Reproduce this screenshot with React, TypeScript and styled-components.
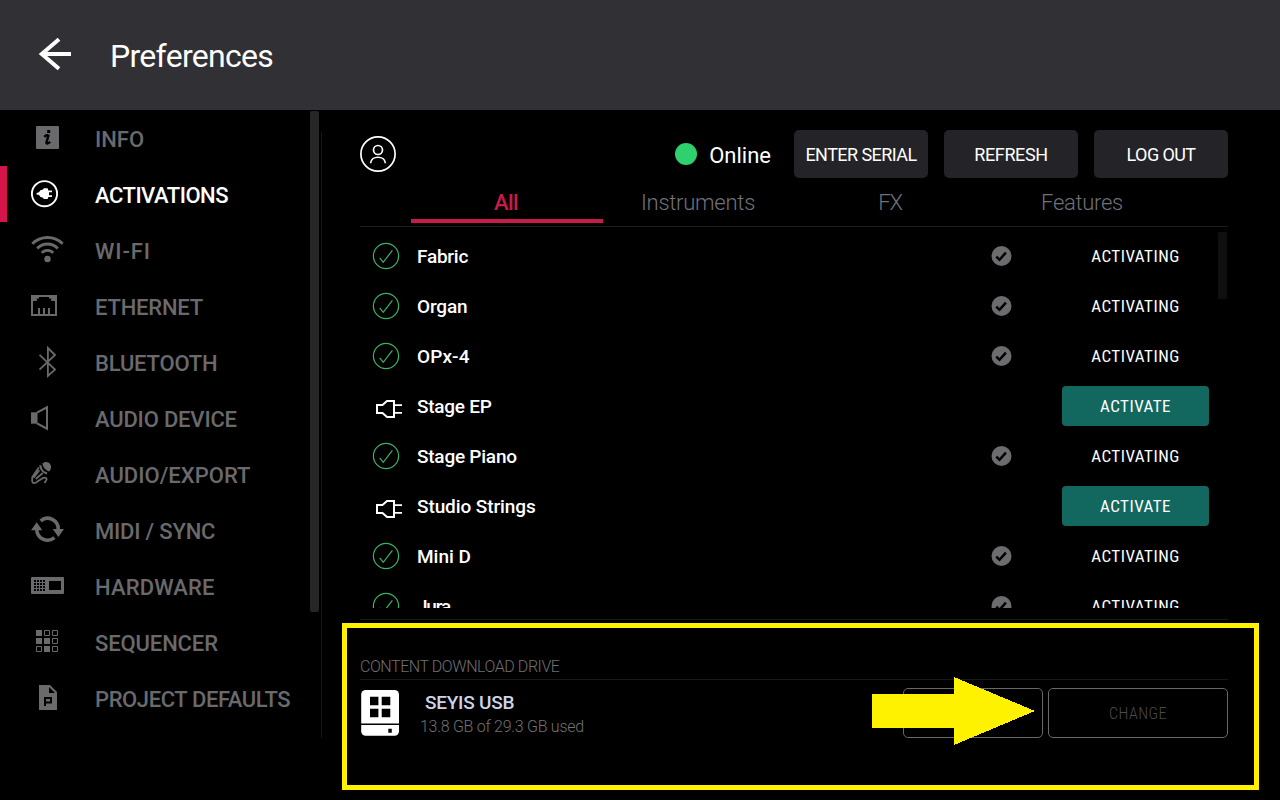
import React from 'react';
import styled, { createGlobalStyle, css } from 'styled-components';

const GlobalStyle = createGlobalStyle`
  * { box-sizing: border-box; }
  body { margin: 0; background: #000; }
  svg { display: block; flex: none; }
  button { font: inherit; margin: 0; padding: 0; border: 0; background: none; color: inherit; }
`;

const Screen = styled.div`
  position: relative;
  display: flex;
  flex-direction: column;
  width: 1280px;
  height: 800px;
  overflow: hidden;
  background: #000;
  color: #fff;
  font-family: Roboto, 'Liberation Sans', sans-serif;
  white-space: nowrap;
`;

const Header = styled.header`
  display: flex;
  align-items: center;
  flex: none;
  height: 110px;
  padding: 0 0 2px 37px;
  background: #313035;
`;

const Title = styled.h1`
  margin: 3px 0 0 36px;
  font-size: 32px;
  font-weight: 400;
  line-height: 40px;
  letter-spacing: -0.7px;
`;

const Body = styled.div`
  display: flex;
  flex: 1;
  min-height: 0;
`;

const Sidebar = styled.nav`
  width: 310px;
`;

const NavItem = styled.a<{ $active?: boolean }>`
  display: flex;
  align-items: center;
  height: 56px;
  padding-left: 21px;
  border-left: 7px solid ${p => (p.$active ? '#d5144b' : 'transparent')};
  color: ${p => (p.$active ? '#fff' : '#6a6a6c')};
`;

const NavLabel = styled.span<{ $spacing: number }>`
  margin-left: 27px;
  padding-top: 3px;
  font-size: 22px;
  font-weight: 500;
  line-height: 28px;
  letter-spacing: ${p => p.$spacing}px;
`;

const SidebarScroll = styled.div`
  width: 9px;
  height: 501px;
  margin-top: 1px;
  border-radius: 2px;
  background: #262626;
`;

const Divider = styled.div`
  width: 1px;
  height: 606px;
  margin: 22px 0 0 2px;
  background: #161616;
`;

const Main = styled.main`
  display: flex;
  flex-direction: column;
  width: 868px;
  margin-left: 38px;
  padding-top: 20px;
`;

const AccountBar = styled.div`
  display: flex;
  align-items: center;
  height: 48px;
`;

const OnlineStatus = styled.div`
  display: flex;
  align-items: center;
  gap: 12px;
  margin: 2px 23px 0 auto;
  font-size: 22px;
`;

const StatusDot = styled.i`
  width: 22px;
  height: 22px;
  margin-top: -2px;
  border-radius: 50%;
  background: #2fd06e;
`;

const AccountActions = styled.div`
  display: flex;
  gap: 16px;
`;

const AccountButton = styled.button<{ $spacing: number }>`
  width: 134px;
  height: 48px;
  padding-top: 1px;
  border-radius: 5px;
  background: #242327;
  font-size: 18px;
  letter-spacing: ${p => p.$spacing}px;
`;

const Tabs = styled.div`
  display: flex;
  justify-content: center;
  height: 49px;
  padding-left: 2px;
  border-bottom: 1px solid #1c1c1c;
`;

const Tab = styled.button<{ $active?: boolean; $spacing: number }>`
  width: 192px;
  height: 45px;
  padding: 8px 2px 0 0;
  border-bottom: 4px solid ${p => (p.$active ? '#c81b48' : 'transparent')};
  color: ${p => (p.$active ? '#c81b48' : '#70717b')};
  font-size: 22px;
  font-weight: ${p => (p.$active ? 500 : 300)};
  letter-spacing: ${p => p.$spacing}px;
`;

const ListArea = styled.div`
  display: flex;
  height: 393px;
  padding-bottom: 11px;
  border-bottom: 1px solid #1c1c1c;
`;

const PluginList = styled.ul`
  width: 858px;
  margin: 4px 0 0;
  padding: 0;
  list-style: none;
  overflow: hidden;
`;

const PluginRow = styled.li`
  display: grid;
  grid-template-columns: 30px 557px 56px 147px;
  column-gap: 16px;
  align-items: center;
  height: 50px;
  padding-left: 11px;
`;

const PluginName = styled.span<{ $spacing: number }>`
  padding-top: 2px;
  font-size: 19px;
  font-weight: 500;
  line-height: 22px;
  letter-spacing: ${p => p.$spacing}px;
`;

const actionText = css`
  font-size: 17px;
  font-weight: 400;
  font-stretch: 75%;
  line-height: 20px;
  letter-spacing: 0.5px;
  text-align: center;
`;

const Activating = styled.span`
  ${actionText}
`;

const ActivateButton = styled.button`
  ${actionText}
  height: 40px;
  border-radius: 4px;
  background: #12685f;
`;

const ListScroll = styled.div`
  width: 9px;
  height: 67px;
  margin-top: 5px;
  border-radius: 1px;
  background: #0f0f0f;
`;

const DriveSection = styled.section`
  padding-top: 36px;
`;

const DriveHeading = styled.h2`
  height: 24px;
  margin: 0;
  border-bottom: 1px solid #191919;
  color: #707070;
  font-size: 16px;
  font-weight: 300;
  line-height: 22px;
  letter-spacing: -0.44px;
`;

const DriveRow = styled.div`
  display: flex;
  align-items: center;
  height: 50px;
  margin-top: 8px;
`;

const DriveInfo = styled.div`
  display: flex;
  flex-direction: column;
  margin: 3px auto 0 19px;
`;

const DriveName = styled.strong`
  padding-left: 5px;
  color: #ced3ea;
  font-size: 19px;
  font-weight: 500;
  line-height: 24px;
  letter-spacing: -0.25px;
`;

const DriveUsage = styled.span`
  color: #727272;
  font-size: 16px;
  font-weight: 300;
  line-height: 23px;
  letter-spacing: -0.28px;
`;

const DriveButton = styled.button<{ $width: number }>`
  width: ${p => p.$width}px;
  height: 50px;
  margin-left: 5px;
  padding-top: 1px;
  border: 1px solid #686868;
  border-radius: 5px;
  color: #4b4b4b;
  font-size: 16px;
  font-weight: 300;
  font-stretch: 75%;
  letter-spacing: 0.5px;
`;

const Highlight = styled.div`
  position: absolute;
  left: 342px;
  top: 623px;
  width: 917px;
  height: 167px;
  border: 5px solid #fff200;
`;

const Pointer = styled.svg`
  position: absolute;
  left: 872px;
  top: 677px;
`;

const sidebarIcons: Record<string, React.ReactNode> = {
  info: (
    <>
      <rect x="8" y="8" width="23" height="23" rx="1" fill="currentColor" />
      <rect x="19.2" y="12" width="3" height="3" fill="#000" />
      <path d="M16.3 18.8 Q18.6 16.4 20.4 17.8 L18.4 24.6 Q18.6 26.8 22.2 23.9" fill="none" stroke="#000" strokeWidth="2.4" />
    </>
  ),
  activations: (
    <>
      <circle cx="16.5" cy="19.7" r="12.6" fill="none" stroke="currentColor" strokeWidth="1.9" />
      <path
        d="M8.6 18.9 11 18.2 12.4 16.2 14.5 15.8 16 14.3H19.6L20.4 16.4H24V18.2H21V21.2H24V23H20.4L19.6 25H16L14.5 23.4 12.4 23 11 21.1 8.6 20.6Z"
        fill="currentColor"
      />
    </>
  ),
  wifi: (
    <>
      <g fill="none" stroke="currentColor" strokeWidth="2.9">
        <path d="M4.3 13.8A21.5 21.5 0 0 1 34.7 13.8" />
        <path d="M9.2 18.5A14.2 14.2 0 0 1 29.8 18.5" />
        <path d="M13.8 22.9A7.6 7.6 0 0 1 25.2 22.9" />
      </g>
      <circle cx="19.5" cy="29" r="3.2" fill="currentColor" />
    </>
  ),
  ethernet: (
    <>
      <rect x="4" y="10" width="24" height="19" fill="none" stroke="currentColor" strokeWidth="2" />
      <path d="M4 10H11V12.5H8.8V15H4ZM28 10H21V12.5H23.2V15H28Z" fill="currentColor" />
      <path d="M11 22V29M16 22V29M21 22V29" stroke="currentColor" strokeWidth="2" />
    </>
  ),
  bluetooth: (
    <path d="M11.5 12.8 27 27.6 19.9 34V6L27 13 11.5 27.6" fill="none" stroke="currentColor" strokeWidth="1.8" />
  ),
  audio: (
    <>
      <path d="M3 14.3H9.5V25.7H3Z" fill="currentColor" />
      <path d="M9 14.7 19 9.3V30.7L9 25.3" fill="none" stroke="currentColor" strokeWidth="2" />
    </>
  ),
  mic: (
    <>
      <path d="M14.3 9.6C17 6.8 21.3 7.7 22.7 10.9 23.7 13.6 22.7 16.3 20.8 17.5 17.5 16.2 15.2 13.4 14.3 9.6Z" fill="currentColor" />
      <path d="M12.3 11.2C12.4 15 15 18.5 19 19.4" fill="none" stroke="currentColor" strokeWidth="2.2" />
      <path
        d="M10.8 13.6 4.2 23.2V27.5C4.8 29.9 7.6 29.2 9 27.8L14.2 24.4C17.7 22.4 19.9 24.6 17.8 27L16.5 29M14.8 19 7.8 25M11.4 16.2 5.6 23.8"
        fill="none"
        stroke="currentColor"
        strokeWidth="1.8"
      />
    </>
  ),
  sync: (
    <>
      <path d="M12.7 10.8A10.7 10.7 0 0 1 30.2 19.5M26.4 27.6A10.7 10.7 0 0 1 8.8 19.5" fill="none" stroke="currentColor" strokeWidth="3.6" />
      <path d="M8.7 12.3 14.3 20.3H3ZM30.4 27 36 19H24.7Z" fill="currentColor" />
    </>
  ),
  hardware: (
    <>
      <rect x="3" y="11" width="33" height="17" rx="1" fill="currentColor" />
      <rect x="21" y="15" width="12" height="9" fill="#000" />
      <g stroke="#000" strokeWidth="2" strokeDasharray="2 1">
        <path d="M6 15H17M6 18H17M6 21H17M6 24H17" />
      </g>
    </>
  ),
  sequencer: (
    <>
      <path d="M8 8H14V14H8ZM8 16H14V22H8ZM16 16H22V22H16ZM16 24H22V30H16Z" fill="currentColor" />
      <path d="M16.5 8.5H21.5V13.5H16.5ZM24.5 8.5H29.5V13.5H24.5ZM24.5 16.5H29.5V21.5H24.5ZM8.5 24.5H13.5V29.5H8.5ZM24.5 24.5H29.5V29.5H24.5Z" fill="none" stroke="currentColor" />
    </>
  ),
  project: (
    <>
      <path d="M11 7H22L29 14V32H11Z" fill="currentColor" />
      <path d="M21 9V15H27Z" fill="#000" />
      <path d="M17 28V20H23V24.5H18" fill="none" stroke="#000" strokeWidth="2" />
    </>
  ),
};

const navItems = [
  { icon: 'info', label: 'INFO', spacing: 0 },
  { icon: 'activations', label: 'ACTIVATIONS', spacing: -0.5, active: true },
  { icon: 'wifi', label: 'WI-FI', spacing: 0.9 },
  { icon: 'ethernet', label: 'ETHERNET', spacing: -0.2 },
  { icon: 'bluetooth', label: 'BLUETOOTH', spacing: -0.2 },
  { icon: 'audio', label: 'AUDIO DEVICE', spacing: -0.18 },
  { icon: 'mic', label: 'AUDIO/EXPORT', spacing: 0.03 },
  { icon: 'sync', label: 'MIDI / SYNC', spacing: -0.19 },
  { icon: 'hardware', label: 'HARDWARE', spacing: 0.15 },
  { icon: 'sequencer', label: 'SEQUENCER', spacing: -0.12 },
  { icon: 'project', label: 'PROJECT DEFAULTS', spacing: -0.4 },
];

const tabs = [
  { label: 'All', spacing: -0.6, active: true },
  { label: 'Instruments', spacing: -0.25 },
  { label: 'FX', spacing: -1.2 },
  { label: 'Features', spacing: -0.3 },
];

const plugins = [
  { name: 'Fabric', active: true, spacing: -0.25 },
  { name: 'Organ', active: true, spacing: -0.15 },
  { name: 'OPx-4', active: true, spacing: 0.1 },
  { name: 'Stage EP', active: false, spacing: -0.25 },
  { name: 'Stage Piano', active: true, spacing: -0.23 },
  { name: 'Studio Strings', active: false, spacing: -0.1 },
  { name: 'Mini D', active: true, spacing: 0 },
  { name: 'Jura', active: true, spacing: -1.2 },
];

const ActivatedIcon = () => (
  <svg width="30" height="30" fill="none" stroke="#36b568" strokeWidth="1.2">
    <circle cx="15" cy="15" r="12.6" />
    <path d="M8.7 16.8 12.2 21.3 21.4 9.3" />
  </svg>
);

const PlugIcon = () => (
  <svg width="31" height="30" fill="none" stroke="#fff" strokeWidth="2">
    <path d="M6 14H11.5L16 10H23V26H16L11.5 22H6Z" />
    <path d="M23 14.2H31M23 21.8H31" strokeWidth="1.7" />
  </svg>
);

const InstalledIcon = () => (
  <svg width="22" height="22">
    <circle cx="11.5" cy="11" r="10" fill="#6c6c6e" />
    <path d="M6.3 11.6 9.5 14.8 15.9 7.6" fill="none" stroke="#000" strokeWidth="2.5" />
  </svg>
);

const DriveIcon = () => (
  <svg width="41" height="50">
    <rect x="1.2" y="2" width="37.8" height="45.8" rx="4.5" fill="#fff" />
    <path d="M10 8.7H18.4V17.3H10ZM21.7 8.7H30.3V17.3H21.7ZM10 20.7H18.4V29.2H10ZM21.7 20.7H30.3V29.2H21.7ZM1 35.6H39.2V37.1H1ZM28.3 40.7H31.8V44.7H28.3Z" fill="#000" />
  </svg>
);

export default function App() {
  return (
    <Screen>
      <GlobalStyle />
      <Header>
        <svg width="37" height="40" fill="none" stroke="#fff" strokeWidth="4">
          <path d="M22 5.3 4.8 20 22 34.7M4 20H34" />
        </svg>
        <Title>Preferences</Title>
      </Header>
      <Body>
        <Sidebar>
          {navItems.map(item => (
            <NavItem key={item.label} $active={item.active}>
              <svg width="40" height="40">{sidebarIcons[item.icon]}</svg>
              <NavLabel $spacing={item.spacing}>{item.label}</NavLabel>
            </NavItem>
          ))}
        </Sidebar>
        <SidebarScroll />
        <Divider />
        <Main>
          <AccountBar>
            <svg width="36" height="36" fill="none" stroke="#fff" strokeWidth="1.7">
              <circle cx="18" cy="18" r="17.1" />
              <circle cx="18" cy="14" r="4.5" />
              <path d="M10.6 27.3C11.2 19.2 24.8 19.2 25.4 27.3" />
            </svg>
            <OnlineStatus>
              <StatusDot />
              Online
            </OnlineStatus>
            <AccountActions>
              <AccountButton $spacing={-0.56}>ENTER SERIAL</AccountButton>
              <AccountButton $spacing={-0.38}>REFRESH</AccountButton>
              <AccountButton $spacing={-0.6}>LOG OUT</AccountButton>
            </AccountActions>
          </AccountBar>
          <Tabs>
            {tabs.map(tab => (
              <Tab key={tab.label} $active={tab.active} $spacing={tab.spacing}>{tab.label}</Tab>
            ))}
          </Tabs>
          <ListArea>
            <PluginList>
              {plugins.map(plugin => (
                <PluginRow key={plugin.name}>
                  {plugin.active ? <ActivatedIcon /> : <PlugIcon />}
                  <PluginName $spacing={plugin.spacing}>{plugin.name}</PluginName>
                  {plugin.active ? <InstalledIcon /> : <span />}
                  {plugin.active ? <Activating>ACTIVATING</Activating> : <ActivateButton>ACTIVATE</ActivateButton>}
                </PluginRow>
              ))}
            </PluginList>
            <ListScroll />
          </ListArea>
          <DriveSection>
            <DriveHeading>CONTENT DOWNLOAD DRIVE</DriveHeading>
            <DriveRow>
              <DriveIcon />
              <DriveInfo>
                <DriveName>SEYIS USB</DriveName>
                <DriveUsage>13.8 GB of 29.3 GB used</DriveUsage>
              </DriveInfo>
              <DriveButton $width={140} aria-label="Eject" />
              <DriveButton $width={180}>CHANGE</DriveButton>
            </DriveRow>
          </DriveSection>
        </Main>
      </Body>
      <Highlight />
      <Pointer width="163" height="68" fill="#fff200" shapeRendering="crispEdges">
        <path d="M0 17H82V0L163 34 82 68V51H0Z" />
      </Pointer>
    </Screen>
  );
}
